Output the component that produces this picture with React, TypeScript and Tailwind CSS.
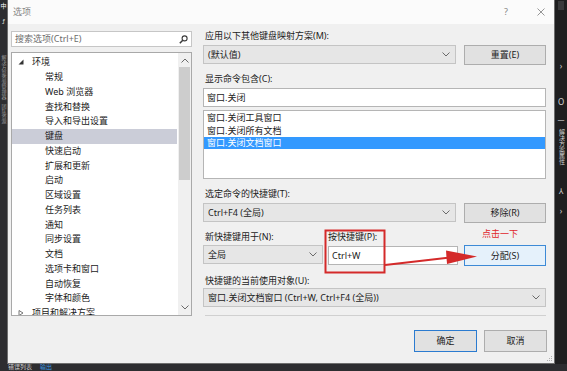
import React from "react";

const Chevron = ({ up = false }: { up?: boolean }) => (
  <svg width="8" height="5" viewBox="0 0 8 5" className="shrink-0">
    <polyline
      points={up ? "0.5,4.5 4,1 7.5,4.5" : "0.5,0.5 4,4 7.5,0.5"}
      fill="none"
      stroke="#6a6a6a"
      strokeWidth="1"
    />
  </svg>
);

function Combo({ text, className = "" }: { text: string; className?: string }) {
  return (
    <div
      className={`flex items-center justify-between h-[19px] bg-[#e6e6e6] border border-[#c4c4c4] pl-[4px] pr-[5px] ${className}`}
    >
      <span className="whitespace-nowrap leading-[14px]">{text}</span>
      <Chevron />
    </div>
  );
}

function Btn({
  text,
  className = "",
}: {
  text: string;
  className?: string;
}) {
  return (
    <div
      className={`flex items-center justify-center border leading-[14px] ${className}`}
    >
      {text}
    </div>
  );
}

const treeItems: { t: string; lvl: number; exp?: boolean; sel?: boolean }[] = [
  { t: "环境", lvl: 0, exp: true },
  { t: "常规", lvl: 1 },
  { t: "Web 浏览器", lvl: 1 },
  { t: "查找和替换", lvl: 1 },
  { t: "导入和导出设置", lvl: 1 },
  { t: "键盘", lvl: 1, sel: true },
  { t: "快速启动", lvl: 1 },
  { t: "扩展和更新", lvl: 1 },
  { t: "启动", lvl: 1 },
  { t: "区域设置", lvl: 1 },
  { t: "任务列表", lvl: 1 },
  { t: "通知", lvl: 1 },
  { t: "同步设置", lvl: 1 },
  { t: "文档", lvl: 1 },
  { t: "选项卡和窗口", lvl: 1 },
  { t: "自动恢复", lvl: 1 },
  { t: "字体和颜色", lvl: 1 },
  { t: "项目和解决方案", lvl: 0, exp: false },
];

export default function App() {
  return (
    <div className="relative w-[567px] h-[371px] overflow-hidden bg-[#2a2a2c] font-['Noto_Sans','Noto_Sans_CJK_SC',sans-serif] text-[9px] text-[#1b1b1b] flex flex-col">
      <div className="flex h-[364px]">
        {/* left IDE strip */}
        <div className="w-[7px] bg-[#2d2d30] flex flex-col items-center overflow-hidden">
          <span className="text-[6px] leading-[7px] text-white mt-[3px]">中</span>
          <span className="text-[6px] leading-[7px] text-[#e0e0e0] mt-[8px]">ƒ</span>
          <span className="[writing-mode:vertical-rl] text-[5px] leading-[6px] text-[#9a9a9a] mt-[30px]">解决方案资源管理器</span>
          <span className="[writing-mode:vertical-rl] text-[5px] leading-[6px] text-[#9a9a9a] mt-[4px]">团队资源</span>
        </div>

        {/* dialog */}
        <div className="w-[548px] flex flex-col border-x border-b border-[#6e6e6e] bg-[#f0f0f0]">
          {/* title bar */}
          <div className="h-[24px] bg-[#fbfbfb] flex items-center pl-[5px] pr-[9px] text-[#858585]">
            <span className="text-[9px] leading-[12px]">选项</span>
            <span className="ml-auto text-[9px] leading-[12px] mr-[29px]">?</span>
            <svg width="8" height="8" viewBox="0 0 8 8">
              <line x1="0.5" y1="0.5" x2="7.5" y2="7.5" stroke="#8a8a8a" strokeWidth="0.9" />
              <line x1="7.5" y1="0.5" x2="0.5" y2="7.5" stroke="#8a8a8a" strokeWidth="0.9" />
            </svg>
          </div>

          {/* body */}
          <div className="relative flex-1 flex pl-[3px] pr-[8px] gap-[11px]">
            {/* left column */}
            <div className="w-[181px] flex flex-col">
              <div className="mt-[7px] h-[16px] bg-white border border-[#c6c6c6] flex items-center pl-[3px] pr-[3px]">
                <span className="text-[#6d6d6d] leading-[14px]">搜索选项(Ctrl+E)</span>
                <svg width="9" height="9" viewBox="0 0 9 9" className="ml-auto">
                  <circle cx="5.6" cy="3.4" r="2.5" fill="none" stroke="#3a3a3a" strokeWidth="1.1" />
                  <line x1="3.8" y1="5.2" x2="0.8" y2="8.2" stroke="#3a3a3a" strokeWidth="1.5" />
                </svg>
              </div>
              <div className="mt-[5px] h-[264px] bg-white border border-[#a9a9a9] flex overflow-hidden">
                <div className="flex-1 pt-[2px] overflow-hidden">
                  {treeItems.map((it, i) => (
                    <div
                      key={i}
                      className={`h-[14.75px] flex items-center mr-[1px] ${
                        it.sel ? "bg-[#cbcdd8]" : ""
                      } ${it.lvl === 0 ? "pl-[6px]" : "pl-[33px]"}`}
                    >
                      {it.lvl === 0 && (
                        <svg width="6" height="6" viewBox="0 0 6 6" className="mr-[8px] shrink-0">
                          {it.exp ? (
                            <polygon points="5.5,0.5 5.5,5.5 0.5,5.5" fill="#333" />
                          ) : (
                            <polygon points="1,0.5 5,3 1,5.5" fill="none" stroke="#555" strokeWidth="0.8" />
                          )}
                        </svg>
                      )}
                      <span className="whitespace-nowrap leading-[14px]">{it.t}</span>
                    </div>
                  ))}
                </div>
                {/* scrollbar */}
                <div className="w-[13px] bg-[#f0f0f0] flex flex-col items-center">
                  <div className="h-[14px] flex items-center justify-center">
                    <Chevron up />
                  </div>
                  <div className="w-[11px] h-[113px] bg-[#cdcdcd]" />
                  <div className="flex-1" />
                  <div className="h-[15px] flex items-center justify-center">
                    <Chevron />
                  </div>
                </div>
              </div>
            </div>

            {/* right column */}
            <div className="w-[343px] flex flex-col">
              <div className="mt-[5px] h-[14px] leading-[14px] pl-[2px]">应用以下其他键盘映射方案(M):</div>
              <div className="mt-[2px] h-[20px] flex gap-[8px] items-start">
                <Combo text="(默认值)" className="w-[253px]" />
                <Btn text="重置(E)" className="w-[82px] h-[20px] bg-[#e1e1e1] border-[#adadad]" />
              </div>

              <div className="mt-[7px] h-[14px] leading-[14px] pl-[2px]">显示命令包含(C):</div>
              <div className="mt-[2px] h-[19px] bg-white border border-[#b5b5b5] flex items-center pl-[3px]">
                <span className="leading-[14px]">窗口.关闭</span>
              </div>
              <div className="mt-[3px] h-[69px] bg-white border border-[#b5b5b5] flex flex-col">
                <div className="h-[13px] leading-[13px] pl-[3px]">窗口.关闭工具窗口</div>
                <div className="h-[13px] leading-[13px] pl-[3px]">窗口.关闭所有文档</div>
                <div className="h-[12px] leading-[12px] pl-[3px] bg-[#3399ff] text-white">窗口.关闭文档窗口</div>
              </div>

              <div className="mt-[8px] h-[14px] leading-[14px] pl-[2px]">选定命令的快捷键(T):</div>
              <div className="mt-[2px] h-[20px] flex gap-[8px] items-start">
                <Combo text="Ctrl+F4 (全局)" className="w-[253px]" />
                <Btn text="移除(R)" className="w-[82px] h-[20px] bg-[#e1e1e1] border-[#adadad]" />
              </div>

              <div className="mt-[7px] h-[14px] flex">
                <div className="w-[125px] leading-[14px] pl-[2px]">新快捷键用于(N):</div>
                <div className="w-[136px] leading-[14px]">按快捷键(P):</div>
                <div className="w-[82px] leading-[10px] text-[#e0262b] pl-[18px] -mt-[1px]">点击一下</div>
              </div>
              <div className="mt-[1px] h-[21px] flex items-start">
                <Combo text="全局" className="w-[120px]" />
                <div className="ml-[5px] mt-[1px] w-[130px] h-[19px] bg-white border border-[#b5b5b5] flex items-center pl-[3px]">
                  <span className="leading-[14px]">Ctrl+W</span>
                </div>
                <Btn text="分配(S)" className="ml-[6px] w-[82px] h-[21px] bg-[#e5f1fb] border-[#3d8ad6]" />
              </div>

              <div className="mt-[8px] h-[14px] leading-[14px] pl-[2px]">快捷键的当前使用对象(U):</div>
              <Combo text="窗口.关闭文档窗口 (Ctrl+W, Ctrl+F4 (全局))" className="w-[343px]" />

              <div className="mt-[8px] h-px bg-[#d0d0d0] ml-[2px]" />

              <div className="mt-[14px] flex justify-end gap-[7px] -mr-[1px]">
                <Btn text="确定" className="w-[63px] h-[22px] bg-[#e1e1e1] border-[#2b7bd0]" />
                <Btn text="取消" className="w-[63px] h-[22px] bg-[#e1e1e1] border-[#adadad]" />
              </div>
            </div>

            {/* size grip */}
            <svg width="6" height="6" viewBox="0 0 6 6" className="absolute right-[1px] bottom-[1px]">
              <rect x="4" y="0" width="1" height="1" fill="#b0b0b0" />
              <rect x="2" y="2" width="1" height="1" fill="#b0b0b0" />
              <rect x="4" y="2" width="1" height="1" fill="#b0b0b0" />
              <rect x="0" y="4" width="1" height="1" fill="#b0b0b0" />
              <rect x="2" y="4" width="1" height="1" fill="#b0b0b0" />
              <rect x="4" y="4" width="1" height="1" fill="#b0b0b0" />
            </svg>
          </div>
        </div>

        {/* right IDE strip */}
        <div className="flex-1 bg-[#1f1f20] flex flex-col items-center overflow-hidden text-[#d8d8d8]">
          <div className="w-[6px] h-[9px] bg-[#3a3a3c] mt-[1px]" />
          <span className="text-[8px] leading-[8px] mt-[52px]">›</span>
          <span className="text-[8px] leading-[8px] mt-[28px]">O</span>
          <span className="text-[7px] leading-[7px] mt-[10px]">—</span>
          <span className="[writing-mode:vertical-rl] text-[6px] leading-[7px] mt-[6px] text-[#cfcfcf]">解决方案属性</span>
          <span className="text-[8px] leading-[8px] mt-[22px]">⅄</span>
          <span className="text-[8px] leading-[8px] mt-[12px]">›</span>
        </div>
      </div>

      {/* bottom IDE strip */}
      <div className="flex-1 bg-[#2d2d30] flex items-start pl-[8px] gap-[8px]">
        <span className="text-[6px] leading-[7px] text-[#d0d0d0]">错误列表</span>
        <span className="text-[6px] leading-[7px] text-[#3c9ae0]">输出</span>
      </div>

      {/* annotation overlay */}
      <svg
        width="567"
        height="371"
        viewBox="0 0 567 371"
        className="absolute left-0 top-0 pointer-events-none"
      >
        <rect x="325.5" y="230.5" width="59" height="42" fill="none" stroke="#d42a2a" strokeWidth="2" />
        <line x1="385" y1="265" x2="450" y2="257.5" stroke="#d42a2a" strokeWidth="2.2" />
        <polygon points="446,250.5 477,256.5 447,264" fill="#d42a2a" />
      </svg>
    </div>
  );
}
